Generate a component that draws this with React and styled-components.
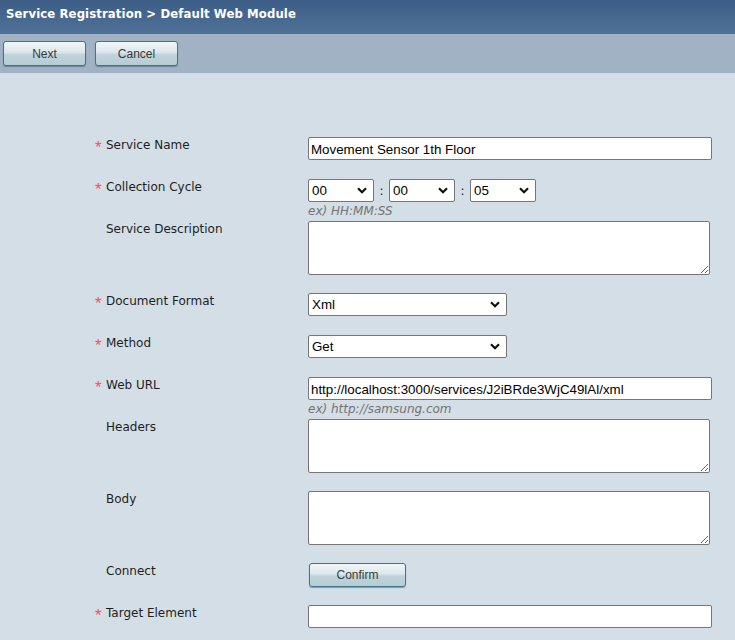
import React from "react";
import styled, { createGlobalStyle } from "styled-components";

const GlobalStyle = createGlobalStyle`
    html, body {
        margin: 0;
        padding: 0;
        background: #d4dee6;
    }
    body {
        font-family: "DejaVu Sans", Verdana, sans-serif;
        font-size: 12px;
        color: #222;
    }
`

const rows = [
    { label: "Service Name", required: true, kind: "input", value: "Movement Sensor 1th Floor" },
    { label: "Collection Cycle", required: true, kind: "time" },
    { label: "Service Description", kind: "textarea" },
    { label: "Document Format", required: true, kind: "select", value: "Xml" },
    { label: "Method", required: true, kind: "select", value: "Get" },
    { label: "Web URL", required: true, kind: "input", value: "http://localhost:3000/services/J2iBRde3WjC49lAl/xml", hint: "ex) http://samsung.com" },
    { label: "Headers", kind: "textarea" },
    { label: "Body", kind: "textarea" },
    { label: "Connect", kind: "button" },
    { label: "Target Element", required: true, kind: "input", value: "" },
];

const Chevron = () => (
    <svg width="10" height="7" viewBox="0 0 10 7">
        <path d="M1 1.2 L5 5.2 L9 1.2" fill="none" stroke="#111" strokeWidth="2.2" />
    </svg>
);

const Select = ({ value, width }) => (
    <SelectBox $width={width}>
        <SelectText>{value}</SelectText>
        <Chevron />
    </SelectBox>
);

const Field = ({ row }) => {
    switch (row.kind) {
        case "input":
            return (
                <FieldCol>
                    <TextInput defaultValue={row.value} />
                    {row.hint && <Hint>{row.hint}</Hint>}
                </FieldCol>
            );
        case "time":
            return (
                <FieldCol>
                    <TimeRow>
                        <Select value="00" width={66} />
                        <Colon>:</Colon>
                        <Select value="00" width={66} />
                        <Colon>:</Colon>
                        <Select value="05" width={66} />
                    </TimeRow>
                    <Hint>ex) HH:MM:SS</Hint>
                </FieldCol>
            );
        case "textarea":
            return <TextArea />;
        case "select":
            return <Select value={row.value} width={199} />;
        case "button":
            return <SmallButton>Confirm</SmallButton>;
        default:
            return null;
    }
};

const App = () => {
    return (
        <>
            <GlobalStyle />
            <Page>
                <TitleBar>Service Registration &gt; Default Web Module</TitleBar>
                <ToolBar>
                    <ToolButton>Next</ToolButton>
                    <ToolButton>Cancel</ToolButton>
                </ToolBar>
                <Form>
                    {rows.map((row) => (
                        <Row key={row.label} $tall={row.kind === "textarea"}>
                            <Label>
                                <Star>{row.required ? "*" : ""}</Star>
                                {row.label}
                            </Label>
                            <Field row={row} />
                        </Row>
                    ))}
                </Form>
            </Page>
        </>
    );
}

export default App;

const Page = styled.div`
    width: 735px;
    min-height: 640px;
    background: #d4dee6;
`

const TitleBar = styled.div`
    height: 34px;
    box-sizing: border-box;
    padding: 6px 0 0 6px;
    background: linear-gradient(to bottom, #3c5e86 0%, #486a90 60%, #4f7297 100%);
    color: #fff;
    font-family: "DejaVu Sans Condensed", "DejaVu Sans", sans-serif;
    font-weight: bold;
    font-size: 13px;
    letter-spacing: 0.1px;
`

const ToolBar = styled.div`
    height: 39px;
    box-sizing: border-box;
    padding: 7px 0 0 3px;
    display: flex;
    gap: 9px;
    background: #a1b2c4;
`

const buttonLook = `
    box-sizing: border-box;
    border: 1px solid #3f7688;
    border-radius: 3px;
    background: linear-gradient(to bottom, #f1f7f9 0%, #dbe7ec 45%, #bfd3db 55%, #b7ccd5 100%);
    box-shadow: 0 1px 1px rgba(40, 70, 90, 0.45);
    font-family: "Liberation Sans", Arial, sans-serif;
    font-size: 12px;
    color: #3a3a3a;
    padding: 0;
    cursor: pointer;
`

const ToolButton = styled.button`
    ${buttonLook}
    width: 83px;
    height: 25px;
`

const SmallButton = styled.button`
    ${buttonLook}
    width: 97px;
    height: 24px;
    margin-left: 1px;
`

const Form = styled.div`
    padding: 64px 0 0 0;
`

const Row = styled.div`
    display: grid;
    grid-template-columns: 308px 1fr;
    align-items: start;
    height: ${(p) => (p.$tall ? 72 : 42)}px;
`

const Label = styled.div`
    display: flex;
    padding-top: 1px;
    line-height: 14px;
    color: #1e1e1e;
`

const Star = styled.span`
    width: 11px;
    height: 14px;
    margin-left: 95px;
    color: #f4505a;
    font-family: "Liberation Sans", Arial, sans-serif;
    font-size: 17px;
    line-height: 19px;
`

const FieldCol = styled.div`
    display: flex;
    flex-direction: column;
`

const TextInput = styled.input`
    box-sizing: border-box;
    width: 404px;
    height: 23px;
    margin: 0;
    padding: 1px 2px 0;
    border: 1px solid #767676;
    border-radius: 2px;
    background: #fff;
    font-family: "Liberation Sans", Arial, sans-serif;
    font-size: 13.33px;
    color: #000;
    outline: none;
`

const TextArea = styled.textarea`
    box-sizing: border-box;
    width: 402px;
    height: 54px;
    margin: 0;
    border: 1px solid #767676;
    border-radius: 2px;
    background: #fff;
    resize: both;
`

const TimeRow = styled.div`
    display: flex;
    align-items: center;
`

const Colon = styled.span`
    width: 15px;
    text-align: center;
    font-size: 12px;
    color: #222;
`

const SelectBox = styled.div`
    box-sizing: border-box;
    width: ${(p) => p.$width}px;
    height: 23px;
    display: flex;
    align-items: center;
    justify-content: space-between;
    padding: 0 6px 0 3px;
    border: 1px solid #767676;
    border-radius: 2px;
    background: #fff;
`

const SelectText = styled.span`
    font-family: "Liberation Sans", Arial, sans-serif;
    font-size: 13.33px;
    color: #000;
`

const Hint = styled.div`
    padding-top: 2px;
    font-style: italic;
    font-size: 12px;
    color: #747474;
    line-height: 14px;
`
